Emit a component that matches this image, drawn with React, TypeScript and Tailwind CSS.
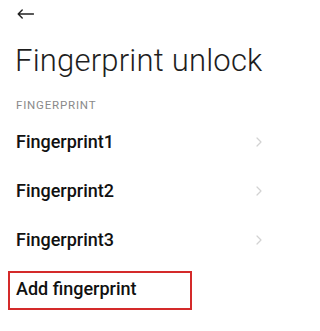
import React from "react";

const Chevron = () => (
  <svg width="6" height="10" viewBox="0 0 6 10" fill="none">
    <path d="M1 1 L5 5 L1 9" stroke="#d2d2d2" strokeWidth="1.2" strokeLinecap="round" strokeLinejoin="round" />
  </svg>
);

export default function App() {
  const items = ["Fingerprint1", "Fingerprint2", "Fingerprint3"];
  return (
    <div className="w-[270px] h-[331px] bg-white overflow-hidden" style={{ fontFamily: "Roboto, 'Noto Sans', sans-serif" }}>
      <div className="h-[43px] pl-[17px] pt-[9px]">
        <svg width="17" height="10" viewBox="0 0 17 10" fill="none">
          <path d="M16.5 5 H1.2 M5.2 1 L1.2 5 L5.2 9" stroke="#222" strokeWidth="1.4" strokeLinecap="round" strokeLinejoin="round" />
        </svg>
      </div>
      <div className="h-[36px] pl-[15px] text-[31px] leading-[36px] font-light text-[#1e1e1e] whitespace-nowrap tracking-[0.2px]">
        Fingerprint unlock
      </div>
      <div className="h-[38px] pl-[16px] pt-[19px] text-[11.5px] leading-[14px] text-[#8a8a8a] tracking-[0.8px]">
        FINGERPRINT
      </div>
      {items.map((t) => (
        <div key={t} className="h-[49px] flex items-center justify-between pl-[16px] pr-[8px]">
          <span className="text-[18px] leading-[22px] font-medium text-[#111]">{t}</span>
          <Chevron />
        </div>
      ))}
      <div className="h-[49px] pt-[7px]">
        <div className="ml-[8px] w-[184px] h-[39px] border-2 border-[#d42a2a] flex items-center pl-[6px] pb-[3px]">
          <span className="text-[18px] leading-[22px] font-medium text-[#111]">Add fingerprint</span>
        </div>
      </div>
    </div>
  );
}
